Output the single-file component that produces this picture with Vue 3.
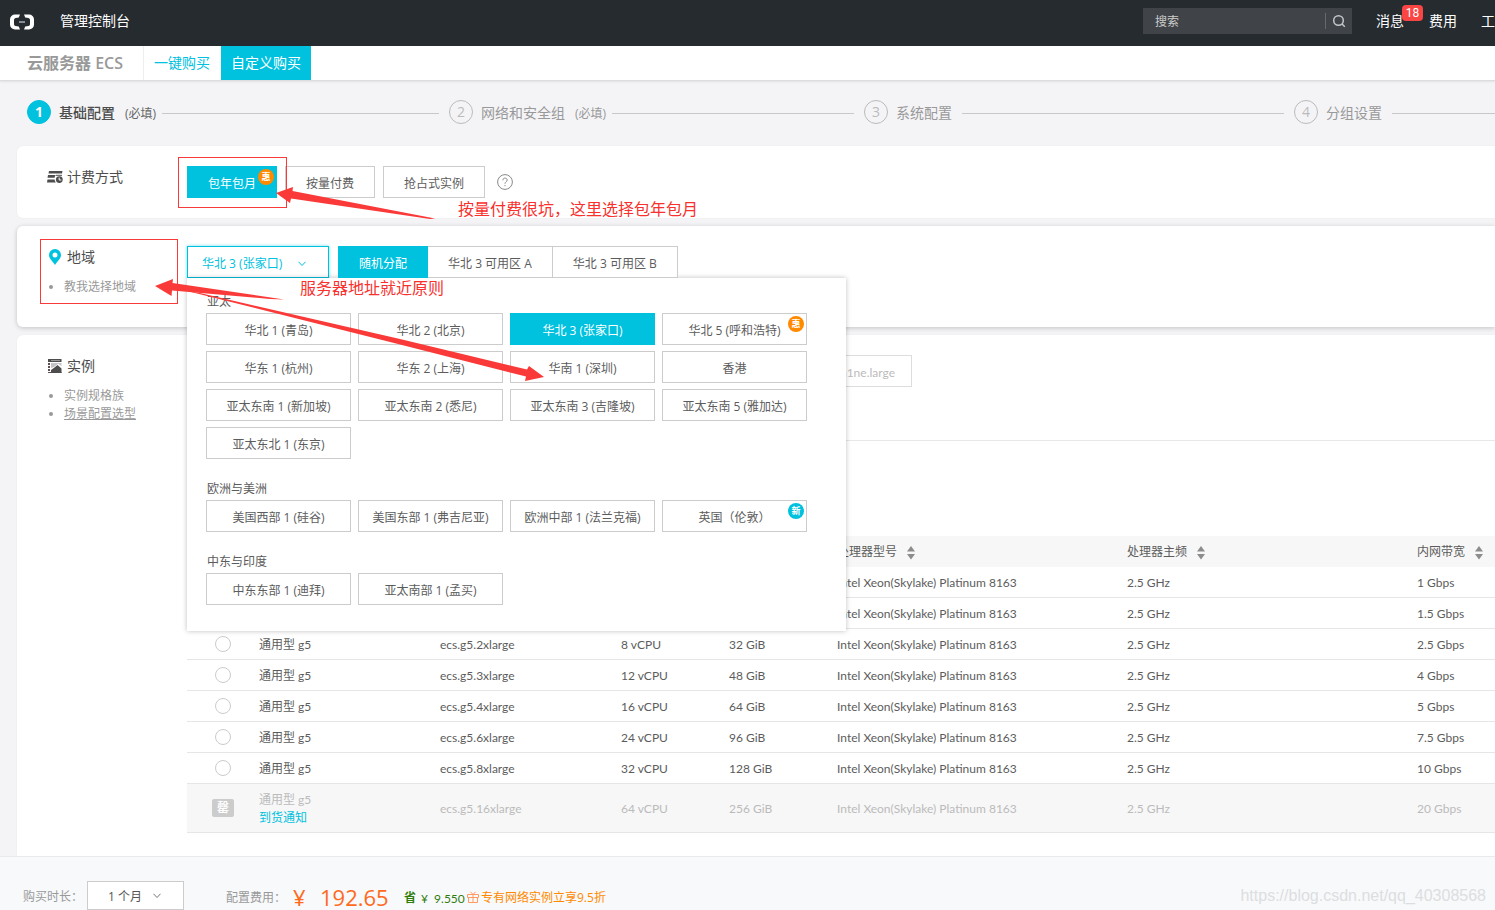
<script setup>
import { ref } from 'vue'

const steps = [
  { n: 1, title: '基础配置', note: '(必填)', active: true },
  { n: 2, title: '网络和安全组', note: '(必填)' },
  { n: 3, title: '系统配置' },
  { n: 4, title: '分组设置' },
]

const zones = ['随机分配', '华北 3 可用区 A', '华北 3 可用区 B']

const regionGroups = [
  {
    name: '亚太',
    items: [
      { name: '华北 1 (青岛)' },
      { name: '华北 2 (北京)' },
      { name: '华北 3 (张家口)', active: true },
      { name: '华北 5 (呼和浩特)', badge: '惠', tone: 'sale' },
      { name: '华东 1 (杭州)' },
      { name: '华东 2 (上海)' },
      { name: '华南 1 (深圳)' },
      { name: '香港' },
      { name: '亚太东南 1 (新加坡)' },
      { name: '亚太东南 2 (悉尼)' },
      { name: '亚太东南 3 (吉隆坡)' },
      { name: '亚太东南 5 (雅加达)' },
      { name: '亚太东北 1 (东京)' },
    ],
  },
  {
    name: '欧洲与美洲',
    items: [
      { name: '美国西部 1 (硅谷)' },
      { name: '美国东部 1 (弗吉尼亚)' },
      { name: '欧洲中部 1 (法兰克福)' },
      { name: '英国（伦敦）', badge: '新', tone: 'new' },
    ],
  },
  {
    name: '中东与印度',
    items: [{ name: '中东东部 1 (迪拜)' }, { name: '亚太南部 1 (孟买)' }],
  },
]

const columns = [
  { label: '规格族' },
  { label: '实例规格' },
  { label: 'vCPU', sort: true },
  { label: '内存', sort: true },
  { label: '处理器型号', sort: true },
  { label: '处理器主频', sort: true },
  { label: '内网带宽', sort: true },
]

const instances = [
  { type: 'ecs.g5.large', cpu: 2, mem: 8, bw: '1' },
  { type: 'ecs.g5.xlarge', cpu: 4, mem: 16, bw: '1.5' },
  { type: 'ecs.g5.2xlarge', cpu: 8, mem: 32, bw: '2.5' },
  { type: 'ecs.g5.3xlarge', cpu: 12, mem: 48, bw: '4' },
  { type: 'ecs.g5.4xlarge', cpu: 16, mem: 64, bw: '5' },
  { type: 'ecs.g5.6xlarge', cpu: 24, mem: 96, bw: '7.5' },
  { type: 'ecs.g5.8xlarge', cpu: 32, mem: 128, bw: '10' },
  { type: 'ecs.g5.16xlarge', cpu: 64, mem: 256, bw: '20', soldOut: true },
]

const selected = ref('')
const duration = ref('1')
</script>

<template>
  <div class="page">
    <header class="topbar">
      <svg class="logo" width="24" height="16" viewBox="0 0 24 16" aria-label="logo">
        <path d="M10 .5H5A5 5 0 0 0 0 5.500V10.500A5 5 0 0 0 5 15.500H10L8.800 12.500L5.500 12A2 2 0 0 1 4 10.200V5.800A2 2 0 0 1 5.500 4L8.800 3.500Z" fill="#fff" />
        <path d="M14 .5H19A5 5 0 0 1 24 5.500V10.500A5 5 0 0 1 19 15.500H14L15.200 12.500L18.500 12A2 2 0 0 0 20 10.200V5.800A2 2 0 0 0 18.500 4L15.200 3.500Z" fill="#fff" />
        <rect x="9" y="7" width="6" height="2" fill="#8a8d99" />
      </svg>
      <a href="#" class="console">管理控制台</a>
      <form class="search" @submit.prevent>
        <input type="text" placeholder="搜索" aria-label="搜索" />
        <button type="submit" aria-label="提交搜索">
          <svg width="14" height="14" viewBox="0 0 14 14" fill="none" stroke="#c4c6c8" stroke-width="1.500">
            <circle cx="6.500" cy="6.500" r="4.800" />
            <path d="M10 10L12.800 12.800" />
          </svg>
        </button>
      </form>
      <nav class="topnav">
        <a href="#">消息<span class="count">18</span></a>
        <a href="#">费用</a>
        <a href="#">工单</a>
      </nav>
    </header>

    <nav class="tabs">
      <h1>云服务器 ECS</h1>
      <a href="#" class="tab">一键购买</a>
      <a href="#" class="tab tab-on">自定义购买</a>
    </nav>

    <main>
      <ol class="steps">
        <li v-for="s in steps" :key="s.n" :class="{ on: s.active }">
          <span class="num">{{ s.n }}</span>
          <span class="step-title">{{ s.title }}</span>
          <span v-if="s.note" class="note">{{ s.note }}</span>
          <span class="line" :class="{ near: s.note }"></span>
        </li>
      </ol>

      <section class="card billing">
        <div class="side">
          <h2>
            <svg width="16" height="14" viewBox="0 0 16 14" fill="#4d4d4d">
              <path d="M2 1H15.500L15 3.500H1.500ZM1 5H8.800A5 5 0 0 0 7.600 7.800H.5ZM.5 9.500H7.600A5 5 0 0 0 8.800 12.500H0Z" />
              <path d="M9 4.800H15V5.800H9Z" />
              <circle cx="12.300" cy="9.600" r="3.400" />
              <path d="M12.200 7.600V10H14.300" fill="none" stroke="#fff" />
            </svg>
            计费方式
          </h2>
        </div>
        <div class="row">
          <button class="btn on">包年包月<span class="badge sale">惠</span></button>
          <button class="btn">按量付费</button>
          <button class="btn">抢占式实例</button>
          <button class="help" aria-label="帮助">
            <svg width="16" height="16" viewBox="0 0 16 16" fill="none" stroke="#86898d">
              <circle cx="8" cy="8" r="7.400" />
              <path d="M5.800 6.300C5.800 3.400 10.200 3.400 10.200 6.100C10.200 7.700 8 7.800 8 9.700M8 11V12.200" />
            </svg>
          </button>
        </div>
      </section>

      <section class="card region">
        <div class="side">
          <h2>
            <svg width="16" height="16" viewBox="0 0 16 16">
              <path fill-rule="evenodd" d="M8 0A6 6 0 0 0 2 6C2 9.500 5.500 12 8 16C10.500 12 14 9.500 14 6A6 6 0 0 0 8 0ZM8 3.500A2.500 2.500 0 1 1 8 8.500A2.500 2.500 0 1 1 8 3.500Z" fill="#00c1de" />
            </svg>
            地域
          </h2>
          <ul><li><a href="#">教我选择地域</a></li></ul>
        </div>
        <div class="row">
          <div class="picker">
            <button class="btn picker-btn" aria-haspopup="true" aria-expanded="true">
              华北 3 (张家口)
              <svg width="8" height="6" viewBox="0 0 8 6" fill="none" stroke="currentColor"><path d="M.5 .8L4 4.500L7.500 .8" /></svg>
            </button>
            <div class="menu">
              <div v-for="g in regionGroups" :key="g.name" class="group">
                <h3>{{ g.name }}</h3>
                <div class="group-grid">
                  <button v-for="r in g.items" :key="r.name" class="btn" :class="{ on: r.active }">
                    {{ r.name }}<span v-if="r.badge" class="badge" :class="r.tone">{{ r.badge }}</span>
                  </button>
                </div>
              </div>
            </div>
          </div>
          <div class="zones">
            <button v-for="(z, i) in zones" :key="z" class="btn" :class="{ on: i === 0 }">{{ z }}</button>
          </div>
        </div>
      </section>

      <section class="card instance">
        <div class="side">
          <h2>
            <svg width="16" height="14" viewBox="0 0 16 14">
              <path d="M1 0H14.500V3H1Z" fill="#4d4d4d" />
              <path d="M4 1H13V2H4Z" fill="#999" />
              <path d="M4 4H14.500V7L11 4.800L7 8L4 9Z" fill="#c4c4c8" />
              <path d="M1 4H3V6H1ZM1 7H3V9H1ZM1 10H3V12H1ZM1 13H14.500V14H1Z" fill="#5d4d50" />
              <path d="M4 11L7.500 8.500L10.500 6L14.500 9.500V14H4Z" fill="#4d4d4d" />
            </svg>
            实例
          </h2>
          <ul>
            <li><a href="#">实例规格族</a></li>
            <li><a href="#" class="under">场景配置选型</a></li>
          </ul>
        </div>
        <div class="body">
          <div class="filter">
            <input type="text" placeholder="搜索规格名称，如：ecs.sn1ne.large" aria-label="搜索规格名称" />
          </div>
          <table>
            <colgroup>
              <col class="c-radio" /><col class="c-name" /><col class="c-name" /><col class="c-num" />
              <col class="c-num" /><col class="c-cpu" /><col class="c-cpu" /><col class="c-bw" />
            </colgroup>
            <thead>
              <tr>
                <th></th>
                <th v-for="c in columns" :key="c.label">
                  {{ c.label }}
                  <svg v-if="c.sort" class="sort" width="8" height="14" viewBox="0 0 8 14" fill="#8c8c8c">
                    <path d="M4 0L8 5.500H0ZM0 8H8L4 13.500Z" />
                  </svg>
                </th>
              </tr>
            </thead>
            <tbody>
              <tr v-for="r in instances" :key="r.type" :class="{ sold: r.soldOut }">
                <td class="pick">
                  <span v-if="r.soldOut" class="empty">罄</span>
                  <input v-else v-model="selected" type="radio" name="instance" :value="r.type" :aria-label="r.type" />
                </td>
                <td>通用型 g5<a v-if="r.soldOut" href="#" class="notify">到货通知</a></td>
                <td>{{ r.type }}</td>
                <td>{{ r.cpu }} vCPU</td>
                <td>{{ r.mem }} GiB</td>
                <td>Intel Xeon(Skylake) Platinum 8163</td>
                <td>2.5 GHz</td>
                <td>{{ r.bw }} Gbps</td>
              </tr>
            </tbody>
          </table>
        </div>
      </section>
    </main>

    <footer class="bottom">
      <label for="duration">购买时长：</label>
      <span class="duration">
        <select id="duration" v-model="duration">
          <option value="1">1 个月</option>
          <option value="2">2 个月</option>
          <option value="3">3 个月</option>
        </select>
        <svg width="8" height="6" viewBox="0 0 8 6" fill="none" stroke="#777"><path d="M.5 .8L4 4.500L7.500 .8" /></svg>
      </span>
      <span class="fee-label">配置费用：</span>
      <span class="yen">¥</span>
      <span class="price">192.65</span>
      <b class="save">省</b>
      <span class="saved">¥&nbsp; 9.550</span>
      <svg class="gift" width="12" height="12" viewBox="0 0 12 12" fill="none" stroke="#ff9a62">
        <path d="M.5 3.500H11.500V6.500H.5ZM1.500 6.500V11.500H10.500V6.500M6 3.500V11.500M6 3.500L3.500 .8M6 3.500L8.500 .8" />
      </svg>
      <a href="#" class="promo">专有网络实例立享9.5折</a>
      <span class="watermark">https://blog.csdn.net/qq_40308568</span>
    </footer>

    <div class="marks">
      <svg width="700" height="400" viewBox="0 0 700 400">
        <g fill="none" stroke="#fa3a38">
          <rect x="178.500" y="157.500" width="108" height="50" />
          <rect x="40.500" y="239.500" width="137" height="64" />
        </g>
        <g fill="#fa3a38">
          <path d="M276 193L293 187L292.500 191L435 218.500L430 219L291 198.500L290 203Z" />
          <path d="M155 286L173 279L172.500 283L284 299.500L270 299L172 290.500L171.500 296Z" />
          <path d="M187 291L200 293L400 339L527 369.500L529 366L544 377L525 381L526 376.500L400 344.500Z" />
        </g>
      </svg>
      <span class="mark-a">按量付费很坑，这里选择包年包月</span>
      <span class="mark-b">服务器地址就近原则</span>
    </div>
  </div>
</template>

<style>
body {
  margin: 0;
  background: #f4f4f7;
}
</style>

<style scoped>
.page {
  position: relative;
  display: flex;
  flex-direction: column;
  height: 100vh;
  overflow: hidden;
  font: 12px/18px "Open Sans", "Noto Sans CJK SC", sans-serif;
  color: #5c5c5c;
  background: #f4f4f7;
}
a { color: inherit; text-decoration: none; }
h1, h2, h3, ul, ol { margin: 0; padding: 0; font-weight: normal; }
button, input, select { font: inherit; color: inherit; border-radius: 0; margin: 0; box-sizing: border-box; }
svg { flex: none; }

.topbar {
  flex: none;
  display: flex;
  align-items: center;
  height: 46px;
  padding: 0 0 4px 10px;
  box-sizing: border-box;
  background: #262b2f;
  color: #fff;
  font-size: 14px;
}
.logo { margin-top: 2px; }
.console { margin-left: 26px; }
.search {
  display: flex;
  align-items: center;
  width: 209px;
  height: 26px;
  margin-left: auto;
  background: #404347;
  font-size: 12px;
}
.search input {
  flex: 1;
  min-width: 0;
  height: 26px;
  padding: 0 12px;
  border: 0;
  background: none;
}
.search input::placeholder { color: #ccc; opacity: 1; }
.search button {
  display: flex;
  align-items: center;
  justify-content: center;
  width: 27px;
  height: 16px;
  padding: 0;
  border: 0;
  border-left: 1px solid #66696d;
  background: none;
}
.topnav {
  display: flex;
  gap: 24px;
  margin: 0 -14px 0 24px;
  white-space: nowrap;
}
.topnav a { position: relative; }
.topnav a:first-child { margin-right: 1px; }
.count {
  position: absolute;
  left: 26px;
  top: -7px;
  width: 21px;
  height: 16px;
  border-radius: 4px;
  background: #fa4545;
  font: 12px/17px Roboto, sans-serif;
  text-align: center;
}

.tabs {
  flex: none;
  display: flex;
  height: 34px;
  line-height: 34px;
  background: #fff;
  border-bottom: 1px solid #dcdcde;
  box-shadow: 0 1px 2px rgba(0, 0, 0, .08);
  font-size: 14px;
}
.tabs h1 {
  padding: 0 20px 0 27px;
  border-right: 1px solid #eee;
  font-size: 16px;
  font-weight: 600;
  color: #999;
}
.tab { padding: 0 11px 0 10px; color: #00c1de; }
.tab-on { padding: 0 10px; background: #00c1de; color: #fff; }

main {
  flex: 1;
  min-height: 0;
  overflow: hidden;
  display: flex;
  flex-direction: column;
  gap: 8px;
  padding-left: 17px;
}
.steps {
  flex: none;
  display: grid;
  grid-template-columns: 422fr 415fr 430fr 201fr;
  height: 57px;
  padding-left: 10px;
  list-style: none;
  white-space: nowrap;
  color: #999;
}
.steps li { display: flex; align-items: center; height: 62px; min-width: 0; }
.num {
  width: 24px;
  height: 24px;
  box-sizing: border-box;
  border: 1px solid #bbb;
  border-radius: 50%;
  font-size: 14px;
  line-height: 22px;
  text-align: center;
  color: #bbb;
}
.on .num { background: #00c1de; border-color: #00c1de; color: #fff; font-weight: bold; }
.step-title { margin-left: 8px; padding-top: 2px; font-size: 14px; }
.on .step-title { color: #4d4d4d; font-weight: 500; }
.note { margin-left: 10px; padding-top: 4px; }
.on .note { color: #666; }
.line { flex: 1; height: 1px; margin: 2px 10px 0; background: #c8c8c8; }
.line.near { margin-left: 6px; }
.steps li:last-child .line { margin-right: 0; }

.card {
  flex: none;
  display: flex;
  box-sizing: border-box;
  background: #fff;
  border-radius: 6px 0 0 6px;
  box-shadow: 0 0 2px rgba(0, 0, 0, .05);
}
.billing { min-height: 72px; }
.region { min-height: 101px; position: relative; z-index: 2; box-shadow: 0 1px 5px rgba(0, 0, 0, .2); }
.instance { flex: 1 0 auto; border-bottom-left-radius: 0; }
.side { flex: none; width: 170px; box-sizing: border-box; padding: 21px 0 0 30px; }
.side h2 {
  display: flex;
  align-items: center;
  gap: 4px;
  height: 20px;
  font-size: 14px;
  color: #4d4d4d;
}
.side ul { margin-top: 11px; padding-left: 17px; color: #999; }
.side li::marker { font-size: 12px; }
.under { text-decoration: underline; text-underline-offset: 1px; }

.row { display: flex; align-items: flex-start; gap: 8px; padding-top: 20px; }
.btn {
  position: relative;
  height: 32px;
  padding: 4px 20px 0;
  border: 1px solid #ccc;
  background: #fff;
  white-space: nowrap;
}
.btn.on { background: #00c1de; border-color: #00c1de; color: #fff; }
.badge {
  position: absolute;
  top: 2px;
  right: 2px;
  width: 16px;
  height: 16px;
  border-radius: 50%;
  color: #fff;
  font-size: 9px;
  font-weight: bold;
  line-height: 15px;
  text-align: center;
}
.sale { background: #ff8a00; }
.new { background: #00c1de; }
.help { height: 32px; padding: 0 4px; border: 0; background: none; display: flex; align-items: center; }

.picker { position: relative; }
.picker-btn {
  display: flex;
  align-items: center;
  gap: 16px;
  width: 142px;
  padding-left: 14px;
  border-color: #00c1de;
  color: #00c1de;
  box-shadow: 0 0 3px rgba(0, 193, 222, .6);
}
.menu {
  position: absolute;
  left: 0;
  top: 32px;
  width: 659px;
  box-sizing: border-box;
  padding: 14px 19px 26px;
  background: #fff;
  box-shadow: 0 0 5px rgba(0, 0, 0, .25);
}
.group + .group { margin-top: 20px; }
.group h3 { font-size: 12px; line-height: 20px; height: 21px; padding-left: 1px; }
.group-grid { display: grid; grid-template-columns: repeat(4, 145px); gap: 6px 7px; }
.group-grid .btn { padding-left: 0; padding-right: 0; }
.zones { display: flex; margin-left: 1px; }
.zones .btn + .btn { margin-left: -1px; }
.zones .on { z-index: 1; }

.body { flex: 1; min-width: 0; }
.filter {
  height: 106px;
  padding-top: 20px;
  box-sizing: border-box;
  border-bottom: 1px solid #e8e8e8;
}
.filter input {
  display: block;
  width: 265px;
  height: 32px;
  margin-left: 460px;
  padding: 2px 16px 0;
  border: 1px solid #ddd;
  font-family: Lato, "Noto Sans CJK SC", sans-serif;
  text-align: right;
}
.filter input::placeholder { color: #bbb; opacity: 1; }

table {
  width: 100%;
  margin-top: 95px;
  table-layout: fixed;
  border-collapse: separate;
  border-spacing: 0;
  white-space: nowrap;
  font-family: Lato, "Noto Sans CJK SC", sans-serif;
}
.c-radio { width: 72px; }
.c-name { width: 181px; }
.c-num { width: 108px; }
.c-cpu { width: 290px; }
.c-bw { width: 78px; }
th, td { padding: 0; text-align: left; font-weight: normal; box-sizing: border-box; }
th { height: 31px; background: #f7f7f7; }
.sort { margin-left: 7px; vertical-align: -4px; }
td { height: 31px; padding-top: 2px; border-bottom: 1px solid #e6e6e6; }
td.pick { padding: 0; text-align: center; }
.pick input {
  display: block;
  appearance: none;
  width: 16px;
  height: 16px;
  margin: 0 auto;
  border: 1px solid #ccc;
  border-radius: 50%;
  background: #fff;
}
.pick input:checked { border: 5px solid #00c1de; }
.sold td { height: 49px; background: #f7f7f7; color: #bbb; }
.sold .empty {
  display: inline-block;
  width: 22px;
  border-radius: 2px;
  background: #ccc;
  color: #fff;
  font-weight: bold;
}
.notify { display: block; color: #00c1de; }

.bottom {
  flex: none;
  position: relative;
  z-index: 3;
  display: flex;
  align-items: center;
  height: 54px;
  padding: 24px 9px 0 23px;
  box-sizing: border-box;
  border-top: 1px solid #e8eaec;
  background: #f8f9fb;
  color: #999;
  white-space: nowrap;
}
.bottom label { width: 64px; padding-top: 2px; }
.duration { position: relative; display: flex; align-items: center; color: #555; }
.duration select {
  appearance: none;
  width: 97px;
  height: 29px;
  padding: 2px 20px 0;
  border: 1px solid #ccc;
  background: #fff;
}
.duration svg { position: absolute; right: 23px; pointer-events: none; }
.fee-label { width: 67px; margin-left: 42px; padding-top: 4px; }
.yen, .price { padding-top: 2px; font-size: 22px; line-height: 26px; color: #ff6a1c; }
.yen { width: 27px; }
.price { width: 84px; }
.save { width: 17px; padding-top: 4px; color: #2f7d0c; }
.saved { width: 46px; padding-top: 6px; font-family: Lato, sans-serif; color: #2f7d0c; }
.gift { margin: 2px 2px 0 0; }
.promo { padding-top: 4px; color: #ff8a00; }
.watermark {
  margin-left: auto;
  font: 16px/18px "Liberation Sans", sans-serif;
  color: #dcdee0;
}

.marks {
  position: absolute;
  left: 0;
  top: 0;
  z-index: 4;
  pointer-events: none;
  color: #f8302e;
  font-size: 16px;
  line-height: 20px;
  white-space: nowrap;
}
.marks svg { display: block; }
.mark-a, .mark-b { position: absolute; }
.mark-a { left: 458px; top: 199px; }
.mark-b { left: 300px; top: 278px; }
</style>
